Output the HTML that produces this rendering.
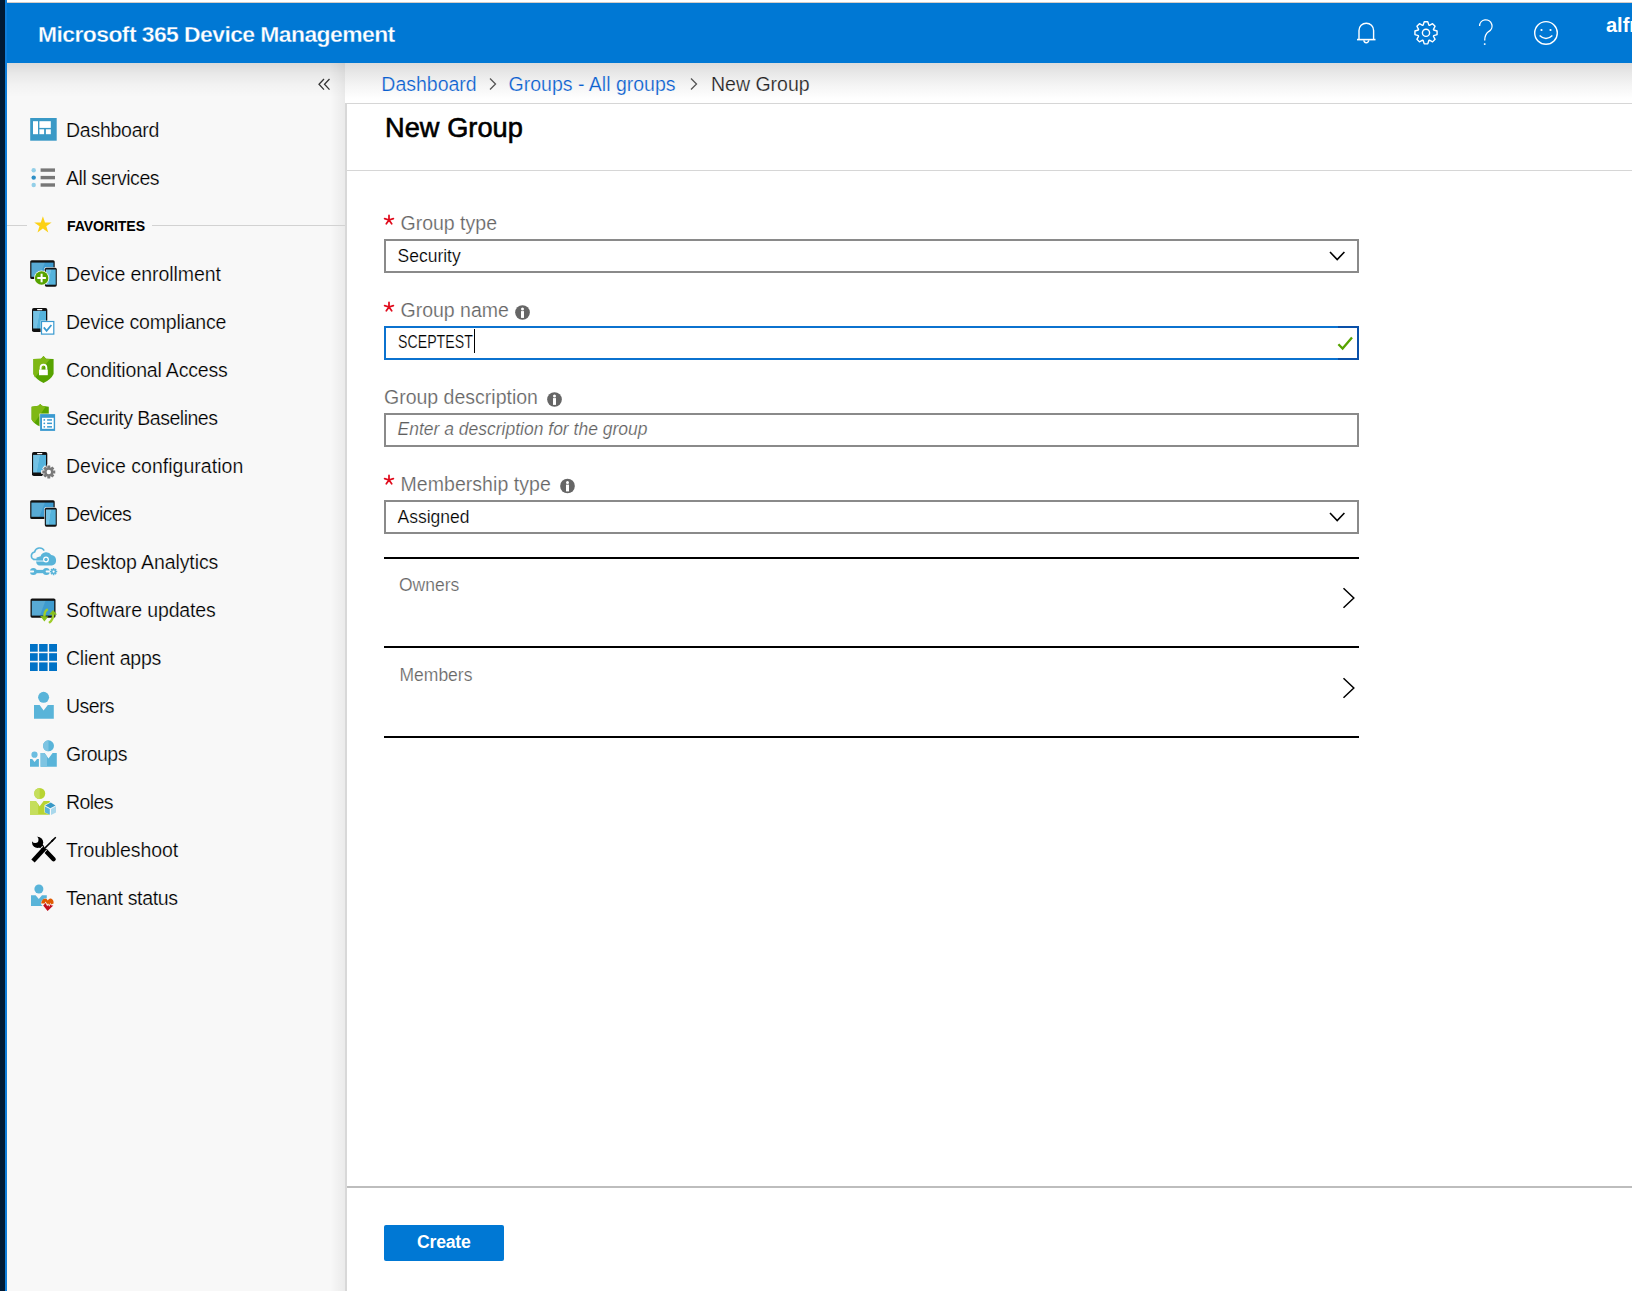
<!DOCTYPE html>
<html><head><meta charset="utf-8"><title>New Group</title><style>
*{margin:0;padding:0;box-sizing:border-box}
html,body{width:1632px;height:1291px;overflow:hidden;background:#fff;font-family:"Liberation Sans",sans-serif}
.a{position:absolute}
.t{position:absolute;white-space:nowrap}
</style></head><body>
<div class="a" style="left:0;top:0;width:5px;height:1291px;background:#001a35"></div>
<div class="a" style="left:5px;top:0;width:2px;height:1291px;background:#0f7fdb"></div>
<div class="a" style="left:7px;top:0;width:1625px;height:3px;background:linear-gradient(#fff 0,#fff 60%,#b7a9a0 100%)"></div>
<div class="a" style="left:7px;top:3px;width:1625px;height:60px;background:#0078d4"></div>
<div class="t" style="left:38px;top:22.82px;font-size:22.9px;line-height:22.9px;color:#fff;font-weight:bold;font-style:normal;letter-spacing:-0.56px;-webkit-text-stroke:0.3px #0078d4">Microsoft 365 Device Management</div>
<svg style="position:absolute;left:1354px;top:20px" width="24" height="26" viewBox="0 0 24 26"><path d="M5 19 V10.5 A7.3 7.3 0 0 1 19.6 10.5 V19" fill="none" stroke="#fff" stroke-width="1.4"/><path d="M3 19.6 H21.5" stroke="#fff" stroke-width="1.6"/><path d="M9.9 20.3 A2.4 2.4 0 0 0 14.7 20.3" fill="none" stroke="#fff" stroke-width="1.4"/></svg>
<svg style="position:absolute;left:1412px;top:19px" width="28" height="28" viewBox="0 0 28 28"><path d="M11.17 6.10 L12.22 2.74 L15.78 2.74 L16.83 6.10 L17.44 6.36 L20.56 4.72 L23.08 7.24 L21.44 10.36 L21.70 10.97 L25.06 12.02 L25.06 15.58 L21.70 16.63 L21.44 17.24 L23.08 20.36 L20.56 22.88 L17.44 21.24 L16.83 21.50 L15.78 24.86 L12.22 24.86 L11.17 21.50 L10.56 21.24 L7.44 22.88 L4.92 20.36 L6.56 17.24 L6.30 16.63 L2.94 15.58 L2.94 12.02 L6.30 10.97 L6.56 10.36 L4.92 7.24 L7.44 4.72 L10.56 6.36 Z" fill="none" stroke="#fff" stroke-width="1.4" stroke-linejoin="round"/><circle cx="14" cy="13.8" r="3.6" fill="none" stroke="#fff" stroke-width="1.4"/></svg>
<svg style="position:absolute;left:1476px;top:19px" width="20" height="28" viewBox="0 0 20 28"><path d="M3.6 7 A6.2 6.2 0 1 1 12.6 12.6 Q8.7 15.5 8.7 21.5" fill="none" stroke="#fff" stroke-width="1.3"/><rect x="7.9" y="24.3" width="1.6" height="1.6" fill="#fff"/></svg>
<svg style="position:absolute;left:1532px;top:19px" width="28" height="28" viewBox="0 0 28 28"><circle cx="14" cy="13.9" r="11.3" fill="none" stroke="#fff" stroke-width="1.4"/><circle cx="9.5" cy="11" r="1.1" fill="#fff"/><circle cx="18.5" cy="11" r="1.1" fill="#fff"/><path d="M7.6 16.6 Q14 22.6 20.4 16.6" fill="none" stroke="#fff" stroke-width="1.4"/></svg>
<div class="t" style="left:1606px;top:14.97px;font-size:20px;line-height:20px;color:#fff;font-weight:bold;font-style:normal;">alfred</div>
<div class="a" style="left:7px;top:63px;width:338px;height:1228px;background:#f8f8f8"></div>
<div class="a" style="left:7px;top:63px;width:338px;height:40px;background:linear-gradient(rgba(0,0,0,0.125) 0px,rgba(0,0,0,0.065) 10px,rgba(0,0,0,0.022) 22px,rgba(0,0,0,0) 34px)"></div>
<div class="a" style="left:330px;top:63px;width:15px;height:1228px;background:linear-gradient(90deg,rgba(0,0,0,0),rgba(0,0,0,0.055))"></div>
<div class="a" style="left:345px;top:103px;width:2px;height:1188px;background:#d8d8d8"></div>
<svg style="position:absolute;left:316px;top:76px" width="16" height="16" viewBox="0 0 16 16"><path d="M8 3 L3 8.3 L8 13.6 M13.5 3 L8.5 8.3 L13.5 13.6" fill="none" stroke="#333" stroke-width="1.3"/></svg>
<svg style="position:absolute;left:26px;top:112px" width="36" height="36" viewBox="0 0 36 36"><rect x="4.2" y="6" width="26.5" height="22.7" fill="#3999c6"/><rect x="7" y="9.2" width="5" height="13" fill="#fff"/><rect x="13.4" y="9.2" width="11.4" height="6.7" fill="#fff"/><rect x="13.4" y="17.3" width="4.7" height="4.9" fill="#fff"/><rect x="19.9" y="17.3" width="4.9" height="4.9" fill="#fff"/></svg>
<div class="t" style="left:66px;top:121.09px;font-size:19.5px;line-height:19.5px;color:#000;font-weight:normal;font-style:normal;letter-spacing:-0.26px;-webkit-text-stroke:0.22px #f8f8f8">Dashboard</div>
<svg style="position:absolute;left:26px;top:160px" width="36" height="36" viewBox="0 0 36 36"><circle cx="7.7" cy="10.2" r="2.2" fill="#93cfe8"/><circle cx="7.7" cy="17.6" r="2.2" fill="#2e8fc6"/><circle cx="7.7" cy="25" r="2.2" fill="#93cfe8"/><rect x="14.6" y="8.4" width="14.4" height="3.4" fill="#777"/><rect x="14.6" y="15.9" width="14.4" height="3.4" fill="#777"/><rect x="14.6" y="23.3" width="14.4" height="3.4" fill="#777"/></svg>
<div class="t" style="left:66px;top:169.09px;font-size:19.5px;line-height:19.5px;color:#000;font-weight:normal;font-style:normal;letter-spacing:-0.46px;-webkit-text-stroke:0.22px #f8f8f8">All services</div>
<svg style="position:absolute;left:26px;top:256px" width="36" height="36" viewBox="0 0 36 36"><defs>
<linearGradient id="scr" x1="0" y1="0" x2="1" y2="0.25"><stop offset="0" stop-color="#74c2e4"/><stop offset="0.48" stop-color="#74c2e4"/><stop offset="0.52" stop-color="#55b3dc"/><stop offset="1" stop-color="#55b3dc"/></linearGradient>
<linearGradient id="scr2" x1="0" y1="0" x2="1" y2="0.25"><stop offset="0" stop-color="#58aad4"/><stop offset="0.55" stop-color="#58aad4"/><stop offset="0.6" stop-color="#3e9bcf"/><stop offset="1" stop-color="#3e9bcf"/></linearGradient>
</defs><rect x="4.2" y="4.2" width="24.5" height="18.8" rx="1.6" fill="#111"/><rect x="5.4" y="6.6" width="22.1" height="14.200000000000001" fill="url(#scr2)"/><rect x="18.3" y="11.2" width="13" height="20" fill="#f8f8f8" rx="1.5"/><rect x="18.8" y="11.7" width="12.0" height="19.0" rx="1.6" fill="#111"/><rect x="19.900000000000002" y="13.5" width="9.8" height="15.2" fill="url(#scr)"/><circle cx="15.6" cy="22" r="7.6" fill="#f8f8f8"/><circle cx="15.6" cy="22" r="6.8" fill="#57a300"/><rect x="11.3" y="21" width="8.6" height="2" fill="#fff"/><rect x="14.6" y="17.7" width="2" height="8.6" fill="#fff"/></svg>
<div class="t" style="left:66px;top:265.09px;font-size:19.5px;line-height:19.5px;color:#000;font-weight:normal;font-style:normal;letter-spacing:-0.07px;-webkit-text-stroke:0.22px #f8f8f8">Device enrollment</div>
<svg style="position:absolute;left:26px;top:304px" width="36" height="36" viewBox="0 0 36 36"><rect x="6" y="4" width="15.3" height="24" rx="1.8" fill="#111"/><rect x="7.1" y="6.9" width="12.9" height="17.6" fill="url(#scr)"/><rect x="11" y="5" width="5.4" height="1.2" rx="0.6" fill="#fff"/><rect x="14.6" y="16.6" width="14" height="14.4" fill="#f8f8f8"/><rect x="15.5" y="17.5" width="12.3" height="12.6" fill="#fff" stroke="#3a9ad0" stroke-width="1.2"/><path d="M17.8 23.4 L20.6 26.8 L25.4 21" fill="none" stroke="#3a9ad0" stroke-width="1.7"/></svg>
<div class="t" style="left:66px;top:313.09px;font-size:19.5px;line-height:19.5px;color:#000;font-weight:normal;font-style:normal;letter-spacing:-0.21px;-webkit-text-stroke:0.22px #f8f8f8">Device compliance</div>
<svg style="position:absolute;left:26px;top:352px" width="36" height="36" viewBox="0 0 36 36"><path d="M17.5 4 L20 6.8 L27.6 7 L27.6 22 Q25 27.5 17.5 31 Q10 27.5 7.4 22 L7.4 7 L15 6.8 Z" fill="#57a300"/><path d="M17.5 4 L20 6.8 L24 6.9 L9 25.5 Q8 23.8 7.4 22 L7.4 7 L15 6.8 Z" fill="#7fb814"/><rect x="13" y="17.6" width="8.8" height="5.6" fill="#fff"/><path d="M14.6 17.8 V15.6 A2.9 2.9 0 0 1 20.4 15.6 V17.8" fill="none" stroke="#fff" stroke-width="1.8"/></svg>
<div class="t" style="left:66px;top:361.09px;font-size:19.5px;line-height:19.5px;color:#000;font-weight:normal;font-style:normal;letter-spacing:-0.17px;-webkit-text-stroke:0.22px #f8f8f8">Conditional Access</div>
<svg style="position:absolute;left:26px;top:400px" width="36" height="36" viewBox="0 0 36 36"><path d="M14.2 4 L16 5.8 L22.8 6.8 L22.8 20 Q20 25 14.2 26.5 Q8 24 5.6 19.5 L5.6 6.8 L12.4 5.8 Z" fill="#57a300"/><path d="M14.2 4 L16 5.8 L19.8 6.4 L8.5 22.8 Q6.5 21.2 5.6 19.5 L5.6 6.8 L12.4 5.8 Z" fill="#7fb814"/><rect x="13.5" y="13.6" width="16" height="18" fill="#f8f8f8"/><rect x="14.1" y="14.1" width="15" height="16.8" fill="#3a9ad0"/><rect x="16" y="17.8" width="11.7" height="11" fill="#fff"/><circle cx="18.3" cy="19.9" r="0.9" fill="#3a9ad0"/><circle cx="18.3" cy="23.3" r="0.9" fill="#3a9ad0"/><circle cx="18.3" cy="26.8" r="0.9" fill="#3a9ad0"/><rect x="21.1" y="19.2" width="4.9" height="1.5" fill="#3a9ad0"/><rect x="21.1" y="22.6" width="4.9" height="1.5" fill="#3a9ad0"/><rect x="21.1" y="26.1" width="4.9" height="1.5" fill="#3a9ad0"/></svg>
<div class="t" style="left:66px;top:409.09px;font-size:19.5px;line-height:19.5px;color:#000;font-weight:normal;font-style:normal;letter-spacing:-0.5px;-webkit-text-stroke:0.22px #f8f8f8">Security Baselines</div>
<svg style="position:absolute;left:26px;top:448px" width="36" height="36" viewBox="0 0 36 36"><rect x="6" y="4" width="15.3" height="24" rx="1.8" fill="#111"/><rect x="7.1" y="6.9" width="12.9" height="17.6" fill="url(#scr)"/><rect x="11" y="5" width="5.4" height="1.2" rx="0.6" fill="#fff"/><path d="M27.68 22.22 L29.94 22.48 L29.94 25.52 L27.68 25.78 L27.51 26.19 L28.92 27.97 L26.77 30.12 L24.99 28.71 L24.58 28.88 L24.32 31.14 L21.28 31.14 L21.02 28.88 L20.61 28.71 L18.83 30.12 L16.68 27.97 L18.09 26.19 L17.92 25.78 L15.66 25.52 L15.66 22.48 L17.92 22.22 L18.09 21.81 L16.68 20.03 L18.83 17.88 L20.61 19.29 L21.02 19.12 L21.28 16.86 L24.32 16.86 L24.58 19.12 L24.99 19.29 L26.77 17.88 L28.92 20.03 L27.51 21.81 Z" fill="#f8f8f8" stroke="#f8f8f8" stroke-width="1"/><path d="M27.12 22.42 L29.26 22.62 L29.26 25.38 L27.12 25.58 L26.97 25.94 L28.34 27.59 L26.39 29.54 L24.74 28.17 L24.38 28.32 L24.18 30.46 L21.42 30.46 L21.22 28.32 L20.86 28.17 L19.21 29.54 L17.26 27.59 L18.63 25.94 L18.48 25.58 L16.34 25.38 L16.34 22.62 L18.48 22.42 L18.63 22.06 L17.26 20.41 L19.21 18.46 L20.86 19.83 L21.22 19.68 L21.42 17.54 L24.18 17.54 L24.38 19.68 L24.74 19.83 L26.39 18.46 L28.34 20.41 L26.97 22.06 Z" fill="#7a7a7a"/><circle cx="22.8" cy="24" r="2.2" fill="#fff"/></svg>
<div class="t" style="left:66px;top:457.09px;font-size:19.5px;line-height:19.5px;color:#000;font-weight:normal;font-style:normal;letter-spacing:0.03px;-webkit-text-stroke:0.22px #f8f8f8">Device configuration</div>
<svg style="position:absolute;left:26px;top:496px" width="36" height="36" viewBox="0 0 36 36"><rect x="4.2" y="4.2" width="24.5" height="18.8" rx="1.6" fill="#111"/><rect x="5.4" y="6.6" width="22.1" height="14.200000000000001" fill="url(#scr2)"/><rect x="18.3" y="11.2" width="13" height="20" fill="#f8f8f8" rx="1.5"/><rect x="18.8" y="11.7" width="12.0" height="19.0" rx="1.6" fill="#111"/><rect x="19.900000000000002" y="13.5" width="9.8" height="15.2" fill="url(#scr)"/></svg>
<div class="t" style="left:66px;top:505.09px;font-size:19.5px;line-height:19.5px;color:#000;font-weight:normal;font-style:normal;letter-spacing:-0.6px;-webkit-text-stroke:0.22px #f8f8f8">Devices</div>
<svg style="position:absolute;left:26px;top:544px" width="36" height="36" viewBox="0 0 36 36"><path d="M8.2 15.6 A3.9 3.9 0 0 1 8.6 8 A5.2 5.2 0 0 1 18.2 6.6" fill="none" stroke="#59b4d9" stroke-width="1.55"/><path d="M10.6 13.6 L14.6 12.2 A6 6 0 0 1 25.3 11 A5.4 5.4 0 0 1 26 21.6 L13.6 21.6 A3.4 3.4 0 0 1 10.3 17.6 Z" fill="#59b4d9"/><rect x="7.4" y="14.7" width="13" height="1.6" fill="#59b4d9"/><rect x="10.2" y="16.4" width="10" height="1.3" fill="#c6e5f3"/><circle cx="20" cy="15.5" r="2.9" fill="#fff"/><circle cx="20" cy="15.5" r="1.7" fill="#59b4d9"/><rect x="8" y="25.9" width="11.5" height="3.3" fill="#59b4d9"/><circle cx="7.4" cy="27.55" r="3.5" fill="#59b4d9"/><circle cx="20.3" cy="27.55" r="3.5" fill="#59b4d9"/><path d="M3.5 26.6 H7.4 A1 1 0 0 1 7.4 28.5 H3.5 Z" fill="#f8f8f8"/><path d="M24.2 26.6 H20.3 A1 1 0 0 0 20.3 28.5 H24.2 Z" fill="#f8f8f8"/><path d="M29.95 26.74 L31.22 26.83 L31.22 28.37 L29.95 28.46 L29.87 28.65 L30.70 29.61 L29.61 30.70 L28.65 29.87 L28.46 29.95 L28.37 31.22 L26.83 31.22 L26.74 29.95 L26.55 29.87 L25.59 30.70 L24.50 29.61 L25.33 28.65 L25.25 28.46 L23.98 28.37 L23.98 26.83 L25.25 26.74 L25.33 26.55 L24.50 25.59 L25.59 24.50 L26.55 25.33 L26.74 25.25 L26.83 23.98 L28.37 23.98 L28.46 25.25 L28.65 25.33 L29.61 24.50 L30.70 25.59 L29.87 26.55 Z" fill="#59b4d9"/><circle cx="27.6" cy="27.6" r="1.1" fill="#fff"/></svg>
<div class="t" style="left:66px;top:553.09px;font-size:19.5px;line-height:19.5px;color:#000;font-weight:normal;font-style:normal;letter-spacing:-0.1px;-webkit-text-stroke:0.22px #f8f8f8">Desktop Analytics</div>
<svg style="position:absolute;left:26px;top:592px" width="36" height="36" viewBox="0 0 36 36"><rect x="4.5" y="6.5" width="25" height="19.2" rx="1.6" fill="#111"/><rect x="5.8" y="8.8" width="22.4" height="14.8" fill="url(#scr2)"/><path d="M21.8 17.2 Q18.2 19 18.4 24.8" fill="none" stroke="#9fcd2a" stroke-width="2.4"/><path d="M14.2 24.1 L22.3 24.4 L18.4 29.4 Z" fill="#86bf1c"/><path d="M27.2 21.8 Q27.6 27.4 23 30.9" fill="none" stroke="#9fcd2a" stroke-width="2.4"/><path d="M22.9 22.7 L31.1 22.4 L27 17.9 Z" fill="#86bf1c"/></svg>
<div class="t" style="left:66px;top:601.09px;font-size:19.5px;line-height:19.5px;color:#000;font-weight:normal;font-style:normal;letter-spacing:-0.13px;-webkit-text-stroke:0.22px #f8f8f8">Software updates</div>
<svg style="position:absolute;left:26px;top:640px" width="36" height="36" viewBox="0 0 36 36"><rect x="4" y="4" width="7.7" height="7.7" fill="#0072c6"/><rect x="4" y="13.2" width="7.7" height="7.6" fill="#0072c6"/><rect x="4" y="22.4" width="7.7" height="8.6" fill="#0072c6"/><rect x="13.1" y="4" width="8.5" height="7.7" fill="#0072c6"/><rect x="13.1" y="13.2" width="8.5" height="7.6" fill="#0072c6"/><rect x="13.1" y="22.4" width="8.5" height="8.6" fill="#0072c6"/><rect x="23.1" y="4" width="7.9" height="7.7" fill="#0072c6"/><rect x="23.1" y="13.2" width="7.9" height="7.6" fill="#0072c6"/><rect x="23.1" y="22.4" width="7.9" height="8.6" fill="#0072c6"/></svg>
<div class="t" style="left:66px;top:649.09px;font-size:19.5px;line-height:19.5px;color:#000;font-weight:normal;font-style:normal;letter-spacing:-0.22px;-webkit-text-stroke:0.22px #f8f8f8">Client apps</div>
<svg style="position:absolute;left:26px;top:688px" width="36" height="36" viewBox="0 0 36 36"><circle cx="17.6" cy="9.3" r="5.5" fill="#59b4d9"/><path d="M8 16.9 L13.6 16.9 L17.6 22.4 L21.8 16.9 L27.8 16.9 L27.8 30.8 L8 30.8 Z" fill="#59b4d9"/></svg>
<div class="t" style="left:66px;top:697.09px;font-size:19.5px;line-height:19.5px;color:#000;font-weight:normal;font-style:normal;letter-spacing:-0.6px;-webkit-text-stroke:0.22px #f8f8f8">Users</div>
<svg style="position:absolute;left:26px;top:736px" width="36" height="36" viewBox="0 0 36 36"><circle cx="22.5" cy="9.8" r="5.5" fill="#59b4d9"/><path d="M22.5 4.3 A5.5 5.5 0 0 0 22.5 15.3 Z" fill="#7ec4e2"/><path d="M14.6 16.9 L18.6 16.9 L22.5 22.6 L26.6 16.9 L30.8 16.9 L30.8 30.8 L14.6 30.8 Z" fill="#59b4d9"/><path d="M14.6 16.9 L18.6 16.9 L21 20.4 L21 30.8 L14.6 30.8 Z" fill="#7ec4e2"/><circle cx="8.5" cy="18.7" r="3.1" fill="#6bbde0"/><path d="M4 23 L6.2 23 L8.6 26 L11 23 L12.9 23 L12.9 30.8 L4 30.8 Z" fill="#59b4d9"/></svg>
<div class="t" style="left:66px;top:745.09px;font-size:19.5px;line-height:19.5px;color:#000;font-weight:normal;font-style:normal;letter-spacing:-0.5px;-webkit-text-stroke:0.22px #f8f8f8">Groups</div>
<svg style="position:absolute;left:26px;top:784px" width="36" height="36" viewBox="0 0 36 36"><circle cx="13.7" cy="9.5" r="5.5" fill="#b8d432"/><path d="M13.7 4 A5.5 5.5 0 0 0 13.7 15 Z" fill="#c5de5c"/><path d="M4 16.9 L9.8 16.9 L13.7 22.2 L17.6 16.9 L23.8 16.9 L23.8 30.8 L4 30.8 Z" fill="#b8d432"/><path d="M4 16.9 L9.8 16.9 L12.2 20.2 L12.2 30.8 L4 30.8 Z" fill="#c5de5c"/><path d="M18.5 21 L24.5 18 L30.3 21.5 L30.3 28.5 L24.5 31 L18.5 28.5 Z" fill="#f8f8f8"/><path d="M19.2 21.4 L24.8 18.4 L29.5 21.4 L24.3 24.2 Z" fill="#3999c6"/><path d="M19 22.4 L23.8 24.9 L23.8 30.8 L19 28.5 Z" fill="#59b4d9"/><path d="M25 24.9 L30 22.2 L30 28.6 L25 31 Z" fill="#a9d8ec"/></svg>
<div class="t" style="left:66px;top:793.09px;font-size:19.5px;line-height:19.5px;color:#000;font-weight:normal;font-style:normal;letter-spacing:-0.6px;-webkit-text-stroke:0.22px #f8f8f8">Roles</div>
<svg style="position:absolute;left:26px;top:832px" width="36" height="36" viewBox="0 0 36 36"><circle cx="11.6" cy="10.4" r="5.6" fill="#000"/><circle cx="9.2" cy="7.7" r="3.3" fill="#f8f8f8"/><path d="M4 6.5 L7.6 4 L10.8 7.4 L8 10.4 Z" fill="#f8f8f8"/><path d="M14.5 13.5 L27.6 27.2" stroke="#000" stroke-width="4.4" stroke-linecap="round"/><path d="M29.8 5.2 L18.6 16.4" stroke="#f8f8f8" stroke-width="3.2"/><path d="M29.8 5.2 L18.6 16.4" stroke="#000" stroke-width="1.5"/><path d="M29.9 5 L26.5 9.9 L25 8.4 Z" fill="#000"/><path d="M18.6 16.2 L7.2 28.8" stroke="#f8f8f8" stroke-width="6.4"/><path d="M18 17 L7 29" stroke="#000" stroke-width="4.6"/><path d="M15.2 16.6 L17.6 14.6 L20.4 17.4 L18.4 19.6 Z" fill="#000"/></svg>
<div class="t" style="left:66px;top:841.09px;font-size:19.5px;line-height:19.5px;color:#000;font-weight:normal;font-style:normal;letter-spacing:-0.09px;-webkit-text-stroke:0.22px #f8f8f8">Troubleshoot</div>
<svg style="position:absolute;left:26px;top:880px" width="36" height="36" viewBox="0 0 36 36"><circle cx="12.9" cy="9" r="4.5" fill="#59b4d9"/><path d="M5 15.2 L9.6 15.2 L12.8 19 L16 15.2 L20.8 15.2 L20.8 26 L5 26 Z" fill="#59b4d9"/><path d="M14.8 24 Q15.5 20 18.2 18.6 Q20.5 17.8 21.8 19.8 Q23 17.6 25.2 18.3 Q28 19.5 27.8 23 Q27.5 25.5 26 27 L21.5 31 L17 26.5 Z" fill="#f8f8f8"/><path d="M15.2 23.6 Q15.5 19.5 18.4 18.7 Q20.6 18.2 21.8 20.4 Q23 18.2 25 18.6 Q27.8 19.5 27.6 23.5 L25 24.4 L24.5 22.7 L23.2 25.2 L22 23.2 L21.3 24.4 L19.6 21.5 L18.7 23.6 Z" fill="#e05a00"/><path d="M17.2 25.4 L19.6 23 L21.2 26.2 L22.2 24.8 L23.2 26.8 L24.5 24.2 L25.5 25.6 L27.3 25.4 L21.6 30.9 Z" fill="#c30f1e"/></svg>
<div class="t" style="left:66px;top:889.09px;font-size:19.5px;line-height:19.5px;color:#000;font-weight:normal;font-style:normal;letter-spacing:-0.33px;-webkit-text-stroke:0.22px #f8f8f8">Tenant status</div>
<div class="a" style="left:7px;top:224.5px;width:20px;height:1px;background:#d2d2d2"></div>
<div class="a" style="left:152px;top:224.5px;width:193px;height:1px;background:#d2d2d2"></div>
<svg style="position:absolute;left:33px;top:215px" width="20" height="18" viewBox="0 0 20 18"><path d="M9.9 1.2 L12 7.4 L18.6 7.4 L13.3 11.3 L15.3 17.4 L9.9 13.6 L4.5 17.4 L6.5 11.3 L1.2 7.4 L7.8 7.4 Z" fill="#fcd116"/></svg>
<div class="t" style="left:67px;top:218.16px;font-size:15.4px;line-height:15.4px;color:#000;font-weight:bold;font-style:normal;transform:scaleX(0.915);transform-origin:0 0;letter-spacing:-0.1px">FAVORITES</div>
<div class="a" style="left:345px;top:63px;width:1287px;height:40px;background:linear-gradient(#dcdcdc 0px,#e8e8e8 10px,#f4f4f4 22px,#fff 36px)"></div>
<div class="a" style="left:345px;top:102.5px;width:1287px;height:1.5px;background:#d6d6d6"></div>
<div class="t" style="left:381.3px;top:74.69px;font-size:19.5px;line-height:19.5px;color:#0b60cf;font-weight:normal;font-style:normal;-webkit-text-stroke:0.22px #f9f9f9">Dashboard</div>
<svg style="position:absolute;left:486px;top:76px" width="14" height="16" viewBox="0 0 14 16"><path d="M4 2.5 L9.5 8 L4 13.5" fill="none" stroke="#555" stroke-width="1.3"/></svg>
<div class="t" style="left:508.6px;top:74.69px;font-size:19.5px;line-height:19.5px;color:#0b60cf;font-weight:normal;font-style:normal;-webkit-text-stroke:0.22px #f9f9f9">Groups - All groups</div>
<svg style="position:absolute;left:687px;top:76px" width="14" height="16" viewBox="0 0 14 16"><path d="M4 2.5 L9.5 8 L4 13.5" fill="none" stroke="#555" stroke-width="1.3"/></svg>
<div class="t" style="left:711px;top:74.69px;font-size:19.5px;line-height:19.5px;color:#222;font-weight:normal;font-style:normal;-webkit-text-stroke:0.22px #f9f9f9">New Group</div>
<div class="t" style="left:385px;top:114.38px;font-size:27.2px;line-height:27.2px;color:#000;font-weight:normal;font-style:normal;letter-spacing:0.05px;-webkit-text-stroke:0.6px #000">New Group</div>
<div class="a" style="left:347px;top:169.5px;width:1285px;height:1.5px;background:#d6d6d6"></div>
<svg style="position:absolute;left:380.5px;top:211.6px" width="16" height="16" viewBox="0 0 16 16"><path d="M8 8 L8.00 3.40 M8 8 L12.37 6.58 M8 8 L10.70 11.72 M8 8 L5.30 11.72 M8 8 L3.63 6.58 " stroke="#e00b1c" stroke-width="1.75" stroke-linecap="round"/></svg>
<div class="t" style="left:400.5px;top:214.49px;font-size:19.5px;line-height:19.5px;color:#666;font-weight:normal;font-style:normal;-webkit-text-stroke:0.2px #fff">Group type</div>
<div class="a" style="left:384px;top:239px;width:975px;height:34px;border:2px solid #8a8a8a;background:#fff"></div>
<div class="t" style="left:397.5px;top:247.79px;font-size:17.5px;line-height:17.5px;color:#000;font-weight:normal;font-style:normal;-webkit-text-stroke:0.2px #fff">Security</div>
<svg style="position:absolute;left:1329px;top:250px" width="17" height="12" viewBox="0 0 17 12"><path d="M1 2 L8.2 9.5 L15.4 2" fill="none" stroke="#000" stroke-width="1.6"/></svg>
<svg style="position:absolute;left:380.5px;top:298.5px" width="16" height="16" viewBox="0 0 16 16"><path d="M8 8 L8.00 3.40 M8 8 L12.37 6.58 M8 8 L10.70 11.72 M8 8 L5.30 11.72 M8 8 L3.63 6.58 " stroke="#e00b1c" stroke-width="1.75" stroke-linecap="round"/></svg>
<div class="t" style="left:400.5px;top:301.39px;font-size:19.5px;line-height:19.5px;color:#666;font-weight:normal;font-style:normal;-webkit-text-stroke:0.2px #fff">Group name</div>
<svg style="position:absolute;left:514px;top:304px" width="17" height="17" viewBox="0 0 17 17"><g transform="translate(0.5,0.5)"><circle cx="8" cy="8" r="7.35" fill="#666"/><circle cx="8" cy="4.4" r="1.5" fill="#fff"/><rect x="6.5" y="6.6" width="3" height="6.8" fill="#fff"/></g></svg>
<div class="a" style="left:384px;top:326px;width:975px;height:34px;border:2px solid #0b72cf;background:#fff"></div>
<div class="a" style="left:1338px;top:326px;width:21px;height:34px;border:2px solid #0a50a8;border-left:none"></div>
<div class="t" style="left:397.5px;top:334.29px;font-size:17.5px;line-height:17.5px;color:#000;font-weight:normal;font-style:normal;transform:scaleX(0.81);transform-origin:0 0;-webkit-text-stroke:0.2px #fff">SCEPTEST</div>
<div class="a" style="left:474px;top:329px;width:1.3px;height:24px;background:#000"></div>
<svg style="position:absolute;left:1336px;top:335px" width="19" height="17" viewBox="0 0 19 17"><path d="M2.4 9.3 L6.6 13.6 L16 2.4" fill="none" stroke="#57a300" stroke-width="2.3"/></svg>
<div class="t" style="left:384px;top:387.69px;font-size:19.5px;line-height:19.5px;color:#666;font-weight:normal;font-style:normal;-webkit-text-stroke:0.2px #fff">Group description</div>
<svg style="position:absolute;left:546px;top:391px" width="17" height="17" viewBox="0 0 17 17"><g transform="translate(0.5,0.5)"><circle cx="8" cy="8" r="7.35" fill="#666"/><circle cx="8" cy="4.4" r="1.5" fill="#fff"/><rect x="6.5" y="6.6" width="3" height="6.8" fill="#fff"/></g></svg>
<div class="a" style="left:384px;top:413px;width:975px;height:34px;border:2px solid #8a8a8a;background:#fff"></div>
<div class="t" style="left:397.5px;top:420.69px;font-size:17.5px;line-height:17.5px;color:#5f5f5f;font-weight:normal;font-style:italic;-webkit-text-stroke:0.2px #fff">Enter a description for the group</div>
<svg style="position:absolute;left:380.5px;top:472.2px" width="16" height="16" viewBox="0 0 16 16"><path d="M8 8 L8.00 3.40 M8 8 L12.37 6.58 M8 8 L10.70 11.72 M8 8 L5.30 11.72 M8 8 L3.63 6.58 " stroke="#e00b1c" stroke-width="1.75" stroke-linecap="round"/></svg>
<div class="t" style="left:400.5px;top:475.19px;font-size:19.5px;line-height:19.5px;color:#666;font-weight:normal;font-style:normal;letter-spacing:0.05px;-webkit-text-stroke:0.2px #fff">Membership type</div>
<svg style="position:absolute;left:559px;top:478px" width="17" height="17" viewBox="0 0 17 17"><g transform="translate(0.5,0)"><circle cx="8" cy="8" r="7.35" fill="#666"/><circle cx="8" cy="4.4" r="1.5" fill="#fff"/><rect x="6.5" y="6.6" width="3" height="6.8" fill="#fff"/></g></svg>
<div class="a" style="left:384px;top:500px;width:975px;height:34px;border:2px solid #8a8a8a;background:#fff"></div>
<div class="t" style="left:397.5px;top:508.79px;font-size:17.5px;line-height:17.5px;color:#000;font-weight:normal;font-style:normal;-webkit-text-stroke:0.2px #fff">Assigned</div>
<svg style="position:absolute;left:1329px;top:511px" width="17" height="12" viewBox="0 0 17 12"><path d="M1 2 L8.2 9.5 L15.4 2" fill="none" stroke="#000" stroke-width="1.6"/></svg>
<div class="a" style="left:384px;top:557px;width:975px;height:2px;background:#000"></div>
<div class="a" style="left:384px;top:646px;width:975px;height:2px;background:#000"></div>
<div class="a" style="left:384px;top:736px;width:975px;height:2px;background:#000"></div>
<div class="t" style="left:399px;top:577.39px;font-size:17.5px;line-height:17.5px;color:#666;font-weight:normal;font-style:normal;-webkit-text-stroke:0.2px #fff">Owners</div>
<div class="t" style="left:399.5px;top:666.89px;font-size:17.5px;line-height:17.5px;color:#666;font-weight:normal;font-style:normal;-webkit-text-stroke:0.2px #fff">Members</div>
<svg style="position:absolute;left:1340px;top:586px" width="18" height="24" viewBox="0 0 18 24"><path d="M3.5 2.3 L13.8 12 L3.5 21.8" fill="none" stroke="#000" stroke-width="1.5"/></svg>
<svg style="position:absolute;left:1340px;top:676px" width="18" height="24" viewBox="0 0 18 24"><path d="M3.5 2.3 L13.8 12 L3.5 21.8" fill="none" stroke="#000" stroke-width="1.5"/></svg>
<div class="a" style="left:347px;top:1186px;width:1285px;height:2px;background:#bdbdbd"></div>
<div class="a" style="left:384px;top:1225px;width:120px;height:36px;background:#0078d4;border-radius:2px"></div>
<div class="t" style="left:417px;top:1234.00px;font-size:17.6px;line-height:17.6px;color:#fff;font-weight:bold;font-style:normal;letter-spacing:-0.2px">Create</div>
</body></html>
